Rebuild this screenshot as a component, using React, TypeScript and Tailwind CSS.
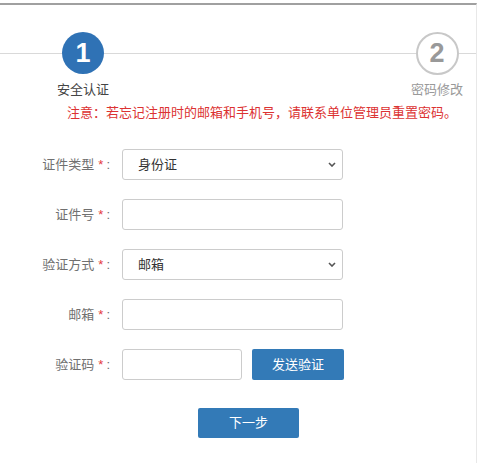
import { useState } from 'react';

const font = "font-['Liberation_Sans','Noto_Sans_CJK_SC',sans-serif]";

function Label({ text }: { text: string }) {
    return (
        <label className="w-[113px] shrink-0 pr-[3px] text-right text-[13px] text-[#707070]">
            {text}
            <span className="ml-[4px] text-[#e4393c]">*</span>
            <span className="ml-[3px]">:</span>
        </label>
    );
}

function Chevron() {
    return (
        <svg
            className="pointer-events-none absolute right-[7px] top-[13px]"
            width="8"
            height="5"
            viewBox="0 0 8 5"
            fill="none"
        >
            <path d="M1 1l3 3 3-3" stroke="#555" strokeWidth="1.6" />
        </svg>
    );
}

export default function App() {
    const [certType, setCertType] = useState('身份证');
    const [method, setMethod] = useState('邮箱');

    const inputCls =
        'h-[31px] rounded-[3px] border border-[#cccccc] bg-white px-[15px] text-[13px] text-[#333] outline-none';

    return (
        <div className={`w-[480px] h-[463px] bg-white pt-[3px] ${font}`}>
            <div className="h-[460px] w-[477px] border-t-2 border-r border-t-[#a0a0a0] border-r-[#e8e8e8]">
                {/* steps */}
                <div className="relative mt-[27px] flex">
                    <div className="absolute left-0 right-0 top-[21px] h-[1px] bg-[#d9d9d9]" />
                    <div className="relative ml-[53px] flex w-[60px] flex-col items-center">
                        <div className="flex h-[42px] w-[42px] items-center justify-center rounded-full bg-[#2f72b5] text-[27px] font-bold leading-none text-white">
                            1
                        </div>
                        <div className="mt-[7px] text-[13px] leading-[18px] text-[#444]">
                            安全认证
                        </div>
                    </div>
                    <div className="relative ml-auto mr-[9px] flex w-[60px] flex-col items-center">
                        <div className="flex h-[43px] w-[43px] items-center justify-center rounded-full border-2 border-[#c8c8c8] bg-white text-[27px] font-bold leading-none text-[#999]">
                            2
                        </div>
                        <div className="mt-[6px] text-[13px] leading-[18px] text-[#999]">
                            密码修改
                        </div>
                    </div>
                </div>

                <p className="mt-[5px] pl-[67px] text-[13px] leading-[18px] text-[#dc3232]">
                    注意：若忘记注册时的邮箱和手机号，请联系单位管理员重置密码。
                </p>

                {/* form */}
                <form className="mt-[27px] flex flex-col gap-[19px]">
                    <div className="flex items-center gap-[9px]">
                        <Label text="证件类型" />
                        <div className="relative">
                            <select
                                value={certType}
                                onChange={(e) => setCertType(e.target.value)}
                                className={`${inputCls} w-[221px] appearance-none`}
                            >
                                <option>身份证</option>
                                <option>护照</option>
                            </select>
                            <Chevron />
                        </div>
                    </div>

                    <div className="flex items-center gap-[9px]">
                        <Label text="证件号" />
                        <input className={`${inputCls} w-[221px]`} />
                    </div>

                    <div className="flex items-center gap-[9px]">
                        <Label text="验证方式" />
                        <div className="relative">
                            <select
                                value={method}
                                onChange={(e) => setMethod(e.target.value)}
                                className={`${inputCls} w-[221px] appearance-none`}
                            >
                                <option>邮箱</option>
                                <option>手机</option>
                            </select>
                            <Chevron />
                        </div>
                    </div>

                    <div className="flex items-center gap-[9px]">
                        <Label text="邮箱" />
                        <input className={`${inputCls} w-[221px]`} />
                    </div>

                    <div className="flex items-center gap-[9px]">
                        <Label text="验证码" />
                        <input className={`${inputCls} w-[120px]`} />
                        <button
                            type="button"
                            className="ml-[1px] h-[31px] w-[92px] rounded-[2px] bg-[#337ab7] text-[13px] text-white"
                        >
                            发送验证
                        </button>
                    </div>

                    <div className="mt-[9px] flex pl-[198px]">
                        <button
                            type="button"
                            className="h-[30px] w-[101px] rounded-[2px] bg-[#337ab7] text-[13px] text-white"
                        >
                            下一步
                        </button>
                    </div>
                </form>
            </div>
        </div>
    );
}
